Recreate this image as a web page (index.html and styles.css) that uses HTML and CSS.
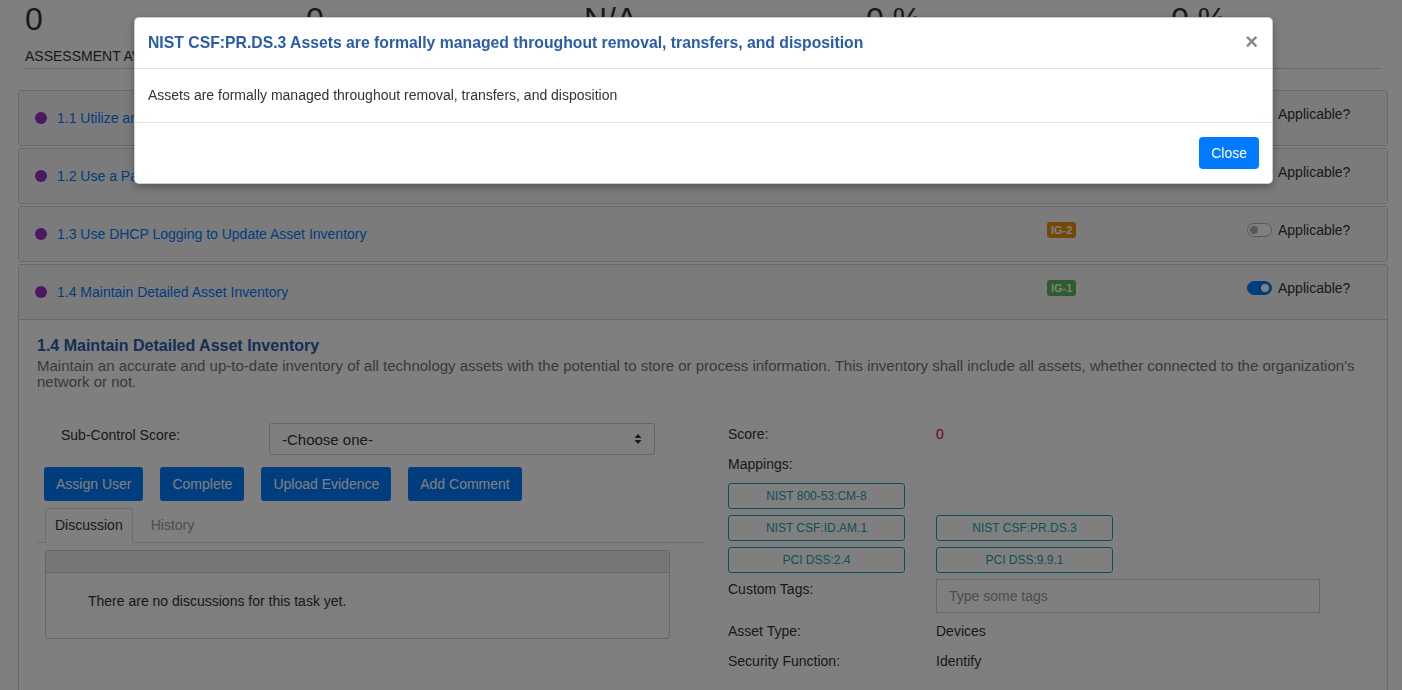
FILE: index.html
```html
<!DOCTYPE html>
<html lang="en">
<head>
  <meta charset="UTF-8">
  <meta name="viewport" content="width=device-width, initial-scale=1.0">
  <title>Assessment</title>
  <link rel="stylesheet" href="styles.css">
</head>
<body>

<div class="page">
  <div class="stats">
    <div class="stat"><div class="stat-value">0</div><div class="stat-label">Assessment Available</div></div>
    <div class="stat"><div class="stat-value">0</div><div class="stat-label">Tasks Assigned</div></div>
    <div class="stat"><div class="stat-value">N/A</div><div class="stat-label">Average Score</div></div>
    <div class="stat"><div class="stat-value">0 %</div><div class="stat-label">In Progress</div></div>
    <div class="stat"><div class="stat-value">0 %</div><div class="stat-label">Completed</div></div>
  </div>

  <div class="controls">
    <div class="card">
      <div class="card-header">
        <div class="card-title"><span class="dot"></span><a href="#">1.1 Utilize an Active Discovery Tool</a></div>
        <div class="card-badge"><span class="badge badge-ig1">IG-1</span></div>
        <div class="card-toggle"><span class="switch"></span>Applicable?</div>
      </div>
    </div>
    <div class="card">
      <div class="card-header">
        <div class="card-title"><span class="dot"></span><a href="#">1.2 Use a Passive Asset Discovery Tool</a></div>
        <div class="card-badge"><span class="badge badge-ig2">IG-2</span></div>
        <div class="card-toggle"><span class="switch"></span>Applicable?</div>
      </div>
    </div>
    <div class="card">
      <div class="card-header">
        <div class="card-title"><span class="dot"></span><a href="#">1.3 Use DHCP Logging to Update Asset Inventory</a></div>
        <div class="card-badge"><span class="badge badge-ig2">IG-2</span></div>
        <div class="card-toggle"><span class="switch"></span>Applicable?</div>
      </div>
    </div>
    <div class="card">
      <div class="card-header">
        <div class="card-title"><span class="dot"></span><a href="#">1.4 Maintain Detailed Asset Inventory</a></div>
        <div class="card-badge"><span class="badge badge-ig1">IG-1</span></div>
        <div class="card-toggle"><span class="switch on"></span>Applicable?</div>
      </div>
      <div class="card-body">
        <h3 class="detail-title">1.4 Maintain Detailed Asset Inventory</h3>
        <p class="detail-text">Maintain an accurate and up-to-date inventory of all technology assets with the potential to store or process information. This inventory shall include all assets, whether connected to the organization's network or not.</p>

        <div class="detail-row">
          <div class="detail-left">
            <div class="score-row">
              <label class="score-label">Sub-Control Score:</label>
              <div class="select">
                <span>-Choose one-</span>
                <svg width="8" height="12" viewBox="0 0 8 12"><path d="M4 1 L7.5 5 H0.5 Z M4 11 L0.5 7 H7.5 Z" fill="#333"/></svg>
              </div>
            </div>
            <div class="actions">
              <button class="btn">Assign User</button>
              <button class="btn">Complete</button>
              <button class="btn">Upload Evidence</button>
              <button class="btn">Add Comment</button>
            </div>
            <div class="tabs">
              <span class="tab active">Discussion</span>
              <span class="tab">History</span>
            </div>
            <div class="panel">
              <div class="panel-head"></div>
              <div class="panel-body">There are no discussions for this task yet.</div>
            </div>
          </div>

          <div class="detail-right">
            <div class="info-row"><span class="info-label">Score:</span><span class="score-value">0</span></div>
            <div class="info-row"><span class="info-label">Mappings:</span></div>
            <div class="mappings">
              <span class="mapping">NIST 800-53:CM-8</span>
              <span></span>
              <span class="mapping">NIST CSF:ID.AM.1</span>
              <span class="mapping">NIST CSF:PR.DS.3</span>
              <span class="mapping">PCI DSS:2.4</span>
              <span class="mapping">PCI DSS:9.9.1</span>
            </div>
            <div class="info-row tags-row"><span class="info-label">Custom Tags:</span><div class="tags-input">Type some tags</div></div>
            <div class="info-row"><span class="info-label">Asset Type:</span><span>Devices</span></div>
            <div class="info-row"><span class="info-label">Security Function:</span><span>Identify</span></div>
          </div>
        </div>
      </div>
    </div>
  </div>
</div>

<div class="backdrop"></div>

<div class="modal">
  <div class="modal-header">
    <h4 class="modal-title">NIST CSF:PR.DS.3 Assets are formally managed throughout removal, transfers, and disposition</h4>
    <span class="modal-close">&times;</span>
  </div>
  <div class="modal-body">Assets are formally managed throughout removal, transfers, and disposition</div>
  <div class="modal-footer">
    <button class="btn btn-close">Close</button>
  </div>
</div>

</body>
</html>
```

FILE: styles.css
```css
body {
  margin: 0;
  font-family: "Liberation Sans", Arial, sans-serif;
  font-size: 14px;
  color: #333;
  background: #fff;
  overflow: hidden;
}
.page {
  padding: 0 14px 0 18px;
}
.stats {
  display: grid;
  grid-template-columns: 281px 278px 282px 305px 1fr;
  margin: 0 8px 0 7px;
  padding-bottom: 2px;
  border-bottom: 1px solid #d0d0d0;
}
.stat-value {
  font-size: 32px;
  line-height: 38px;
}
.stat-label {
  margin-top: 8px;
  font-size: 14px;
  line-height: 20px;
  text-transform: uppercase;
}
.controls {
  margin-top: 21px;
}
.card {
  border: 1px solid #d2d2d2;
  border-radius: 3px;
  margin-bottom: 2px;
  background: #fff;
}
.card-header {
  display: grid;
  grid-template-columns: 1012px 200px 1fr;
  align-items: center;
  min-height: 54px;
  padding-left: 16px;
  background: #f7f7f7;
}
.card-title {
  display: flex;
  align-items: center;
}
.card-title a {
  color: #007bff;
  text-decoration: none;
}
.dot {
  width: 12px;
  height: 12px;
  border-radius: 50%;
  background: #9b2ec4;
  margin-right: 10px;
}
.card-badge, .card-toggle {
  margin-bottom: 9px;
}
.badge {
  display: inline-block;
  padding: 2px 4px;
  border-radius: 3px;
  font-size: 11px;
  font-weight: bold;
  color: #fff;
}
.badge-ig1 { background: #5cb85c; }
.badge-ig2 { background: #e8900c; }
.card-toggle {
  display: flex;
  align-items: center;
}
.switch {
  position: relative;
  width: 23px;
  height: 12px;
  border: 1px solid #adb5bd;
  border-radius: 7px;
  background: #fff;
  margin-right: 6px;
}
.switch::after {
  content: "";
  position: absolute;
  top: 2px;
  left: 2px;
  width: 8px;
  height: 8px;
  border-radius: 50%;
  background: #adb5bd;
}
.switch.on {
  background: #007bff;
  border-color: #007bff;
}
.switch.on::after {
  left: 13px;
  background: #fff;
}
.card-body {
  border-top: 1px solid #d2d2d2;
  padding: 16px 18px 20px;
}
.detail-title {
  margin: 0;
  font-size: 16px;
  line-height: 20px;
  color: #2a5caa;
}
.detail-text {
  margin: 2px 0 0;
  font-size: 15px;
  line-height: 16px;
  color: #6c757d;
}
.detail-row {
  display: grid;
  grid-template-columns: 667px 1fr;
  margin-top: 33px;
}
.score-row {
  display: flex;
  align-items: center;
  padding-left: 24px;
}
.score-label {
  width: 208px;
  margin-bottom: 8px;
}
.select {
  display: flex;
  align-items: center;
  justify-content: space-between;
  width: 360px;
  height: 30px;
  padding: 0 12px;
  border: 1px solid #ccc;
  border-radius: 3px;
  font-size: 15px;
}
.actions {
  display: flex;
  gap: 17px;
  margin: 12px 0 0 7px;
}
.btn {
  font-family: inherit;
  font-size: 14px;
  height: 34px;
  padding: 0 12px;
  color: #fff;
  background: #007bff;
  border: none;
  border-radius: 3px;
}
.tabs {
  display: flex;
  margin-top: 7px;
  padding-left: 8px;
  border-bottom: 1px solid #ddd;
}
.tab {
  padding: 8px 9px;
  line-height: 17px;
  color: #999;
  border: 1px solid transparent;
  border-bottom: none;
  margin-right: 8px;
}
.tab.active {
  color: #333;
  border-color: #ddd;
  border-radius: 3px 3px 0 0;
  background: #fff;
  margin-bottom: -1px;
}
.panel {
  margin: 7px 34px 0 8px;
  border: 1px solid #ccc;
  border-radius: 3px;
  background: #fbfdfc;
}
.panel-head {
  height: 21px;
  background: #eceeed;
  border-bottom: 1px solid #ccc;
}
.panel-body {
  padding: 19px 42px 28px;
  line-height: 18px;
}
.detail-right {
  padding-left: 24px;
  padding-top: 1px;
}
.info-row {
  display: flex;
  align-items: center;
  height: 20px;
  margin-bottom: 10px;
}
.info-label {
  width: 208px;
}
.score-value {
  color: #d9000d;
}
.mappings {
  display: grid;
  grid-template-columns: 177px 177px;
  column-gap: 31px;
  row-gap: 6px;
  margin-top: -1px;
}
.mapping {
  height: 24px;
  line-height: 24px;
  text-align: center;
  font-size: 12px;
  color: #17a2b8;
  border: 1px solid #17a2b8;
  border-radius: 3px;
}
.tags-row {
  align-items: flex-start;
  height: 34px;
  margin-top: 6px;
  margin-bottom: 8px;
}
.tags-row .info-label {
  margin-top: 2px;
}
.tags-input {
  width: 370px;
  height: 32px;
  line-height: 32px;
  padding-left: 12px;
  border: 1px solid #ccc;
  color: #999;
}
.backdrop {
  position: fixed;
  inset: 0;
  background: rgba(0, 0, 0, 0.5);
}
.modal {
  position: fixed;
  top: 17px;
  left: 134px;
  width: 1137px;
  background: #fff;
  border: 1px solid rgba(0, 0, 0, 0.2);
  border-radius: 5px;
  box-shadow: 0 3px 9px rgba(0, 0, 0, 0.3);
}
.modal-header {
  display: flex;
  align-items: center;
  justify-content: space-between;
  height: 50px;
  padding: 0 14px 0 13px;
  border-bottom: 1px solid #e2e2e2;
}
.modal-title {
  margin: 0;
  font-size: 15.75px;
  color: #2a5caa;
}
.modal-close {
  font-size: 22px;
  font-weight: bold;
  color: #888;
  margin-top: -2px;
}
.modal-body {
  padding: 18px 13px;
  line-height: 17px;
  border-bottom: 1px solid #e2e2e2;
}
.modal-footer {
  display: flex;
  justify-content: flex-end;
  padding: 14px 13px 14px;
}
.btn-close {
  height: 32px;
  padding: 0 12px;
  font-size: 14px;
  border-radius: 4px;
}
```
